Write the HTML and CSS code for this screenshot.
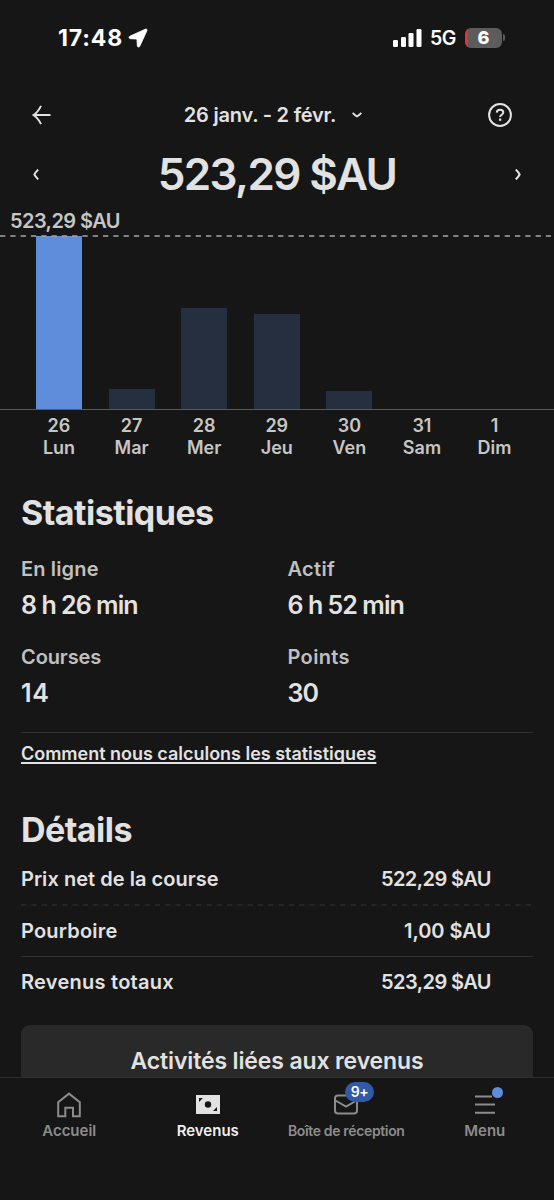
FILE: index.html
```
<!DOCTYPE html>
<html lang="fr">
<head>
<meta charset="utf-8">
<title>Revenus</title>
<link rel="stylesheet" href="styles.css">
</head>
<body>
<div class="screen">
  <header class="status">
    <div class="clock"><span>17:48</span>
      <svg width="20" height="20" viewBox="0 0 20 20"><path d="M17.300 1.200 1.800 8.200c-1.300.7-1 2.300.6 2.500l5.400.3c.8 0 1.100.4 1.200 1.100l.3 5.600c.2 1.600 1.800 1.900 2.500.5L18.900 2.700c.5-1.200-.4-2-1.600-1.500z" fill="#fff" stroke="#fff" stroke-width=".8"/></svg>
    </div>
    <div class="radio">
      <svg width="29" height="18" viewBox="0 0 29 18" fill="#fff"><rect x="0" y="11" width="5" height="7" rx="1.300"/><rect x="8" y="8" width="5" height="10" rx="1.300"/><rect x="15.500" y="4" width="5" height="14" rx="1.300"/><rect x="23.500" y="0" width="5" height="18" rx="1.300"/></svg>
      <span class="network">5G</span>
      <span class="battery">6</span><span class="battery-tip"></span>
    </div>
  </header>

  <div class="period">
    <svg width="20" height="20" viewBox="0 0 20 20" fill="none" stroke="#e2e2e2" stroke-width="1.900"><path d="M1.500 10H18.500M9 .8C7.500 4 4.500 8 1.500 10c3 2 6 6 7.500 9.200"/></svg>
    <div class="range"><span>26 janv. - 2 févr.</span>
      <svg width="10" height="6" viewBox="0 0 10 6" fill="none" stroke="#e2e2e2" stroke-width="1.900"><path d="M.7.8C2 2.200 3.300 3.600 5 4.500 6.700 3.600 8 2.200 9.300.8"/></svg>
    </div>
    <svg width="24" height="24" viewBox="0 0 24 24" fill="none" stroke="#e2e2e2" stroke-width="2"><circle cx="12" cy="12" r="10.900"/><path d="M8.700 9.600C8.900 7.700 10.200 6.800 12 6.800c1.900 0 3.300 1 3.300 2.700 0 2.300-3.200 2.200-3.200 4.500"/><path d="M12.100 15.500v2.300" stroke-width="2.300"/></svg>
  </div>

  <div class="total">
    <svg width="6" height="11" viewBox="0 0 6 11" fill="none" stroke="#e2e2e2" stroke-width="1.900"><path d="M5.200.6C3.800 2 2.300 3.500 1.400 5.500 2.300 7.500 3.800 9 5.200 10.400"/></svg>
    <span class="amount">523,29 $AU</span>
    <svg width="6" height="11" viewBox="0 0 6 11" fill="none" stroke="#e2e2e2" stroke-width="2.100"><path d="M.8.600C2.200 2 3.700 3.500 4.600 5.500 3.700 7.500 2.200 9 .8 10.400"/></svg>
  </div>

  <section class="chart">
    <div class="peak">523,29 $AU</div>
    <div class="plot">
      <svg class="limit" width="554" height="2"><path d="M0 1H551" stroke="#a6a6a6" stroke-width="1.700" stroke-dasharray="5.300 5"/></svg>
      <div class="bar bar-active" style="height:173px"></div>
      <div class="bar" style="height:20px"></div>
      <div class="bar" style="height:101px"></div>
      <div class="bar" style="height:95px"></div>
      <div class="bar" style="height:18px"></div>
    </div>
    <div class="days">
      <div>26<br>Lun</div><div>27<br>Mar</div><div>28<br>Mer</div><div>29<br>Jeu</div><div>30<br>Ven</div><div>31<br>Sam</div><div>1<br>Dim</div>
    </div>
  </section>

  <main class="content">
    <h2 class="heading">Statistiques</h2>
    <div class="stats">
      <div><div class="label label-online">En ligne</div><div class="value">8 h 26 min</div></div>
      <div><div class="label">Actif</div><div class="value">6 h 52 min</div></div>
      <div><div class="label label-trips">Courses</div><div class="value value-trips">14</div></div>
      <div><div class="label">Points</div><div class="value">30</div></div>
    </div>
    <div class="explain"><a class="link">Comment nous calculons les statistiques</a></div>

    <h2 class="heading heading-details">Détails</h2>
    <div class="row"><span>Prix net de la course</span><span class="price">522,29 $AU</span></div>
    <svg class="dashes" width="513" height="2"><path d="M0 1H513" stroke="#2b2b2b" stroke-width="1.500" stroke-dasharray="5.300 5"/></svg>
    <div class="row row-tip"><span>Pourboire</span><span class="price price-tip">1,00 $AU</span></div>
    <div class="row row-sum"><span>Revenus totaux</span><span class="price">523,29 $AU</span></div>
    <div class="card">Activités liées aux revenus</div>
  </main>

  <nav class="tabs">
    <div class="tab">
      <svg width="24" height="26" viewBox="0 0 24 26" fill="none" stroke="#8c8c8c" stroke-width="2"><path d="M1.200 24.200V10.200L12 1.600l10.800 8.600v14H16v-8.400H8.300v8.400z"/></svg>
      <span>Accueil</span>
    </div>
    <div class="tab tab-current">
      <svg width="24" height="26" viewBox="0 0 24 26"><path d="M0 3h24v19H0z" fill="#e2e2e2"/><circle cx="12" cy="12.500" r="3.200" fill="#161616"/><path d="M3 6h4L3 10zM21 19h-4l4-4z" fill="#161616"/></svg>
      <span>Revenus</span>
    </div>
    <div class="tab tab-inbox">
      <svg width="24" height="26" viewBox="0 0 24 26" fill="none" stroke="#8c8c8c" stroke-width="2"><rect x="1" y="3.500" width="22" height="18" rx="3"/><path d="M1.500 8.500 12 14.500l10.500-6"/></svg>
      <span>Boîte de réception</span>
      <b class="badge">9+</b>
    </div>
    <div class="tab tab-menu">
      <svg width="20" height="26" viewBox="0 0 20 26" stroke="#8c8c8c" stroke-width="2"><path d="M0 4.500h17M0 12.500h20M0 20.800h20"/></svg>
      <span>Menu</span>
      <i class="dot"></i>
    </div>
  </nav>
</div>
</body>
</html>
```
FILE: styles.css
```
* { box-sizing: border-box; }
body {
  margin: 0;
  background: #161616;
  color: #e2e2e2;
  font-family: Inter, "Noto Sans", sans-serif;
  font-weight: 600;
}
svg { display: block; flex: none; }

.screen {
  width: 554px;
  height: 1200px;
  display: flex;
  flex-direction: column;
  overflow: hidden;
}

.status {
  height: 76px;
  padding: 0 49px 0 58px;
  display: flex;
  align-items: center;
  justify-content: space-between;
  color: #fff;
}
.clock {
  display: flex;
  align-items: center;
  gap: 5px;
  font-size: 23px;
  font-weight: 700;
  letter-spacing: 0.85px;
}
.radio { display: flex; align-items: center; }
.network {
  margin-left: 8px;
  width: 35px;
  font-size: 19.5px;
  letter-spacing: -0.4px;
}
.battery {
  width: 37px;
  height: 20px;
  border-radius: 6px;
  background: linear-gradient(90deg, #e0343c 3px, #5c5c5c 3px);
  font-size: 18px;
  font-weight: 800;
  line-height: 20px;
  text-align: center;
}
.battery-tip {
  width: 2px;
  height: 7px;
  margin-left: 1px;
  border-radius: 0 2px 2px 0;
  background: #5c5c5c;
}

.period {
  height: 78px;
  padding: 1px 42px 0 32px;
  display: flex;
  align-items: center;
  justify-content: space-between;
}
.range {
  padding-left: 6px;
  display: flex;
  align-items: center;
  gap: 16px;
  font-size: 20px;
  letter-spacing: -0.22px;
}

.total {
  height: 42px;
  padding: 0 33px 0 33px;
  display: flex;
  align-items: center;
  justify-content: space-between;
}
.amount {
  font-size: 44px;
  line-height: 42px;
  letter-spacing: -1.6px;
}

.chart {
  padding-top: 1px;
  color: #c6c6c6;
}
.peak {
  height: 39px;
  padding: 13px 0 0 10px;
  font-size: 20px;
  line-height: 24px;
  letter-spacing: -0.58px;
}
.plot {
  height: 175px;
  padding-left: 36px;
  display: flex;
  align-items: flex-end;
  gap: 26.6px;
  border-bottom: 1px solid #5a5a5a;
  position: relative;
}
.limit { position: absolute; left: 0; top: 0; }
.bar { width: 46px; background: #262f3f; }
.bar-active { background: #5f8ddc; }
.days {
  width: 508.2px;
  margin: 5px 0 0 22.7px;
  display: grid;
  grid-template-columns: repeat(7, 1fr);
  font-size: 18px;
  line-height: 22px;
  text-align: center;
}

.content { padding: 0 21px; }
.heading {
  margin: 32px 0 0;
  font-size: 34px;
  font-weight: 700;
  line-height: 44px;
  letter-spacing: -0.52px;
}
.stats {
  margin-top: 20px;
  display: grid;
  grid-template-columns: 266.5px 1fr;
}
.stats > div { height: 88px; }
.label {
  color: #c0c0c0;
  font-size: 20px;
  line-height: 28px;
  letter-spacing: 0.35px;
}
.label-online { letter-spacing: 0.15px; }
.label-trips { letter-spacing: -0.1px; }
.value {
  padding-top: 6px;
  font-size: 25px;
  line-height: 32px;
  letter-spacing: -0.95px;
}
.value-trips { letter-spacing: 0.8px; }
.explain {
  margin-top: 1px;
  padding-top: 10px;
  border-top: 1px solid #303030;
  line-height: 22px;
}
.link {
  font-size: 18px;
  letter-spacing: -0.02px;
  text-decoration: underline 2px;
  text-underline-offset: 2px;
  text-decoration-skip-ink: none;
}
.heading-details { margin-top: 43px; }
.row {
  height: 52px;
  padding-right: 42px;
  display: flex;
  align-items: center;
  justify-content: space-between;
  font-size: 20px;
  letter-spacing: 0.04px;
}
.heading-details + .row { margin-top: 1px; }
.price { letter-spacing: -0.58px; }
.price-tip { letter-spacing: -0.05px; }
.dashes { margin-top: -1px; }
.row-tip { height: 50px; letter-spacing: 0.2px; }
.row-sum {
  height: 51px;
  border-top: 1px solid #303030;
  letter-spacing: 0.26px;
}
.card {
  margin-top: 18px;
  height: 52px;
  border-radius: 9px 9px 0 0;
  background: #292929;
  font-size: 23px;
  line-height: 72px;
  text-align: center;
  letter-spacing: -0.13px;
}

.tabs {
  flex: none;
  height: 123px;
  border-top: 1px solid #2e2e2e;
  background: #161616;
  display: grid;
  grid-template-columns: repeat(4, 1fr);
  color: #8c8c8c;
  font-size: 15px;
  position: relative;
}
.tab {
  padding-top: 14px;
  display: flex;
  flex-direction: column;
  align-items: center;
  gap: 3px;
  line-height: 20px;
  position: relative;
}
.tab-current { color: #eeeeee; }
.tab-inbox { font-size: 14px; letter-spacing: -0.35px; }
.badge {
  position: absolute;
  left: 68px;
  top: 4px;
  width: 29px;
  height: 20px;
  border-radius: 10px;
  background: #3259a4;
  color: #fff;
  font-size: 14px;
  font-weight: 600;
  line-height: 20px;
  text-align: center;
}
.dot {
  position: absolute;
  left: 76px;
  top: 9px;
  width: 11px;
  height: 11px;
  border-radius: 50%;
  background: #5f8ddc;
}
```
